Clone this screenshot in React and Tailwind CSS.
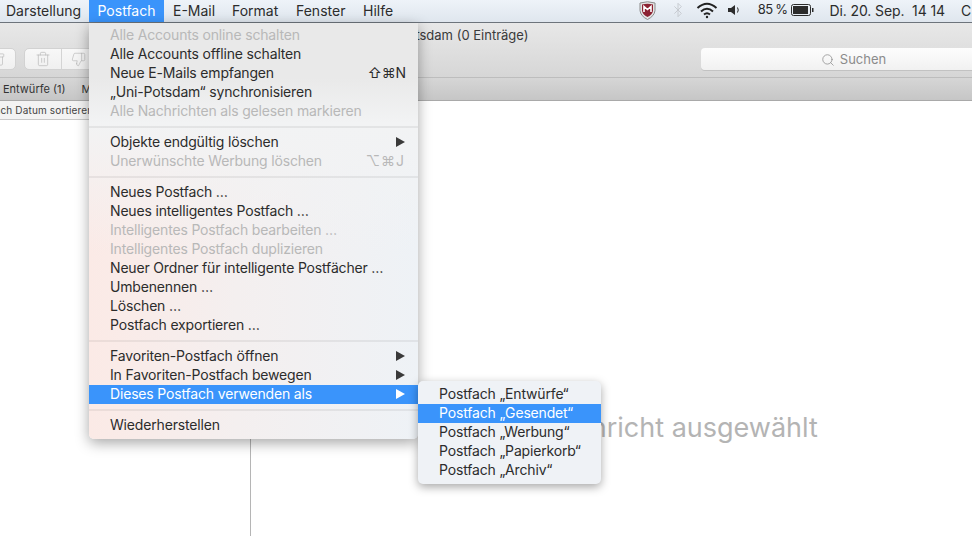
import { Trash2, ThumbsDown, Search, Bluetooth, Archive } from 'lucide-react';

const font = { fontFamily: '"Inter", "Liberation Sans", sans-serif' };

const sections = [
  [
    { label: 'Alle Accounts online schalten', off: true },
    { label: 'Alle Accounts offline schalten' },
    { label: 'Neue E-Mails empfangen', shortcut: '⇧⌘N', shortcutClass: 'mr-[1px]' },
    { label: '„Uni-Potsdam“ synchronisieren' },
    { label: 'Alle Nachrichten als gelesen markieren', off: true },
  ],
  [
    { label: 'Objekte endgültig löschen', arrow: true },
    { label: 'Unerwünschte Werbung löschen', off: true, shortcut: '⌥⌘J', shortcutClass: 'mr-[2px] tracking-[1px]' },
  ],
  [
    { label: 'Neues Postfach …' },
    { label: 'Neues intelligentes Postfach …' },
    { label: 'Intelligentes Postfach bearbeiten …', off: true },
    { label: 'Intelligentes Postfach duplizieren', off: true },
    { label: 'Neuer Ordner für intelligente Postfächer …' },
    { label: 'Umbenennen …' },
    { label: 'Löschen …' },
    { label: 'Postfach exportieren …' },
  ],
  [
    { label: 'Favoriten-Postfach öffnen', arrow: true },
    { label: 'In Favoriten-Postfach bewegen', arrow: true },
    { label: 'Dieses Postfach verwenden als', arrow: true, active: true },
  ],
  [{ label: 'Wiederherstellen' }],
];

const submenu = ['Postfach „Entwürfe“', 'Postfach „Gesendet“', 'Postfach „Werbung“', 'Postfach „Papierkorb“', 'Postfach „Archiv“'];

function MenuRow({ item }) {
  let color = 'text-[#2c2c2c]';
  if (item.off) color = 'text-[#b8b8b8]';
  if (item.active) color = 'bg-[#3a94fb] text-white';
  return (
    <div className={`flex h-[19px] items-center pb-[2px] pl-[21px] pr-[11px] text-[14px] tracking-[-0.17px] ${color}`}>
      <span className="flex-1 whitespace-nowrap">{item.label}</span>
      {item.shortcut && <span className={item.shortcutClass}>{item.shortcut}</span>}
      {item.arrow && (
        <svg width="9" height="10" viewBox="0 0 9 10" className="mr-[2px]">
          <path d="M0 0 L9 5 L0 10 Z" fill={item.active ? '#fff' : '#3a3a3a'} />
        </svg>
      )}
    </div>
  );
}

function MenuBar() {
  return (
    <div className="flex h-[23px] shrink-0 items-center border-b border-[#6d747c] bg-gradient-to-b from-[#eef3f9] to-[#dfe6ee] pb-[2px] text-[14px] text-[#2c2c2c]">
      <span className="ml-[6px] w-[83px]">Darstellung</span>
      <span className="mb-[-2px] flex h-[22px] w-[75px] items-center justify-center bg-[#3a94fb] pb-[2px] text-white">Postfach</span>
      <span className="ml-[9px] w-[59px]">E-Mail</span>
      <span className="w-[64px]">Format</span>
      <span className="w-[67px]">Fenster</span>
      <span>Hilfe</span>
      <div className="ml-auto flex items-center">
        <svg width="17" height="19" viewBox="0 0 17 19" className="mr-[14px]">
          <path d="M1 2 Q8.500 -0.500 16 2 L16 9.500 Q15.500 15 8.500 18.500 Q1.500 15 1 9.500 Z" fill="#e4e4e4" stroke="#8b8b8b" strokeWidth="1" />
          <path d="M3 3.500 Q8.500 1.800 14 3.500 L14 9.500 Q13.500 13.500 8.500 16 Q3.500 13.500 3 9.500 Z" fill="#8c2232" />
          <path d="M5 11 L5 5.500 L8.500 8.500 L12 5.500 L12 11" fill="none" stroke="#fff" strokeWidth="1.600" />
        </svg>
        <Bluetooth size={16} strokeWidth={1.2} className="mr-[10px] text-[#c0c4c9]" />
        <svg width="22" height="17" viewBox="0 0 22 17" className="mr-[10px]" fill="none" stroke="#222" strokeWidth="2">
          <path d="M1.500 6 Q11 -2.500 20.500 6" />
          <path d="M5 9.500 Q11 4 17 9.500" />
          <path d="M8 12.500 Q11 10 14 12.500" />
          <circle cx="11" cy="15" r="1.200" fill="#222" stroke="none" />
        </svg>
        <svg width="13" height="12" viewBox="0 0 13 12" className="mr-[17px]">
          <path d="M0 4 H3 L7 1 V11 L3 8 H0 Z" fill="#2c2c2c" />
          <path d="M9.500 3.500 Q11 6 9.500 8.500" fill="none" stroke="#2c2c2c" strokeWidth="1" />
        </svg>
        <span className="mr-[4px] text-[13px] tracking-[-0.7px]">85 %</span>
        <svg width="23" height="12" viewBox="0 0 23 12" className="mr-[15px]">
          <rect x="0.500" y="0.500" width="19" height="11" rx="2" fill="none" stroke="#2c2c2c" />
          <rect x="2" y="2" width="15" height="8" fill="#2c2c2c" />
          <rect x="21" y="4" width="1.500" height="4" fill="#2c2c2c" />
        </svg>
        <span className="mr-[16px] whitespace-nowrap tracking-[-0.1px]">Di. 20. Sep.&nbsp; 14 14</span>
        <span className="mr-[1px] w-[10px] overflow-hidden">C</span>
      </div>
    </div>
  );
}

function Toolbar() {
  return (
    <div className="flex h-[55px] shrink-0 flex-col border-b border-[#bdbdbd] bg-gradient-to-b from-[#e8e8e8] to-[#d6d6d6]">
      <div className="flex h-[25px] items-center justify-center pr-[134px] text-[13px] text-[#3a3a3a]">
        Eingang – Uni-Potsdam (0 Einträge)
      </div>
      <div className="flex items-center">
        <div className="ml-[-20px] flex h-[22px] w-[36px] items-center rounded-[5px] border border-[#d2d2d2] bg-gradient-to-b from-[#f8f8f8] to-[#f0f0f0]">
          <Archive size={15} strokeWidth={1} className="ml-[9px] text-[#b5b5b5]" />
        </div>
        <div className="ml-[8px] flex h-[22px] w-[70px] items-center rounded-[5px] border border-[#d2d2d2] bg-gradient-to-b from-[#f8f8f8] to-[#f0f0f0]">
          <div className="flex h-full w-[37px] items-center justify-center border-r border-[#d4d4d4]">
            <Trash2 size={16} strokeWidth={1} className="text-[#b5b5b5]" />
          </div>
          <ThumbsDown size={15} strokeWidth={1} className="ml-[9px] text-[#b5b5b5]" />
        </div>
        <div className="ml-auto flex h-[22px] w-[271px] items-center justify-center rounded-l-[4px] bg-gradient-to-b from-[#fdfdfd] to-[#f1f1f1] pl-[34px] pt-[1px] text-[13px] text-[#8b8b8b] shadow-[0_1px_0_#c2c2c2]">
          <Search size={14} strokeWidth={1.300} className="mr-[5px]" />
          Suchen
        </div>
      </div>
    </div>
  );
}

export default function App() {
  return (
    <div className="relative flex h-[536px] w-[972px] flex-col overflow-hidden bg-white" style={font}>
      <MenuBar />
      <Toolbar />
      <div className="flex h-[23px] shrink-0 items-center border-b border-[#a9a9a9] bg-gradient-to-b from-[#d6d6d6] to-[#c6c6c6] pl-[3px] text-[11px] text-[#333]">
        <span className="whitespace-nowrap">Entwürfe (1)</span>
        <span className="ml-[16px] w-[8px] overflow-hidden">M</span>
      </div>
      <div className="flex min-h-0 flex-1">
        <div className="w-[251px] shrink-0 border-r border-[#b5b5b5]">
          <div className="h-[19px] overflow-hidden whitespace-nowrap border-b border-[#c9c9c9] bg-[#f3f3f3] text-[10px] leading-[18px] tracking-[0.15px] text-[#444]">
            <span className="ml-[-13px] inline-block">Nach Datum sortieren</span>
          </div>
        </div>
        <div className="flex flex-1 items-center justify-center pl-[56px] pt-[220px]">
          <span className="whitespace-nowrap text-[27px] text-[#b4b4b4]">Keine Nachricht ausgewählt</span>
        </div>
      </div>

      <div className="absolute left-[89px] top-[23px] w-[329px] rounded-b-[5px] bg-[linear-gradient(180deg,#e9e9e9_0px,#e9e9e9_55px,#f2f3f4_100px,rgba(242,243,244,0)_230px),linear-gradient(90deg,#fbeae6_0%,#f4efef_45%,#eef2f6_100%)] pb-[4px] pt-[3px] shadow-[0_4px_14px_rgba(0,0,0,0.35)]">
        {sections.map((rows, i) => (
          <div key={i}>
            {i > 0 && <div className="my-[5px] h-[2px] bg-black/[0.06]" />}
            {rows.map((item) => (
              <MenuRow key={item.label} item={item} />
            ))}
          </div>
        ))}
      </div>

      <div className="absolute left-[418px] top-[381px] w-[183px] rounded-[5px] bg-[#eff2f6] py-[4px] shadow-[0_3px_10px_rgba(0,0,0,0.35)]">
        {submenu.map((label, i) => (
          <div
            key={label}
            className={`flex h-[19px] items-center pb-[2px] pl-[21px] text-[14px] tracking-[-0.17px] ${i === 1 ? 'bg-[#3a94fb] text-white' : 'text-[#2c2c2c]'}`}
          >
            {label}
          </div>
        ))}
      </div>
    </div>
  );
}
